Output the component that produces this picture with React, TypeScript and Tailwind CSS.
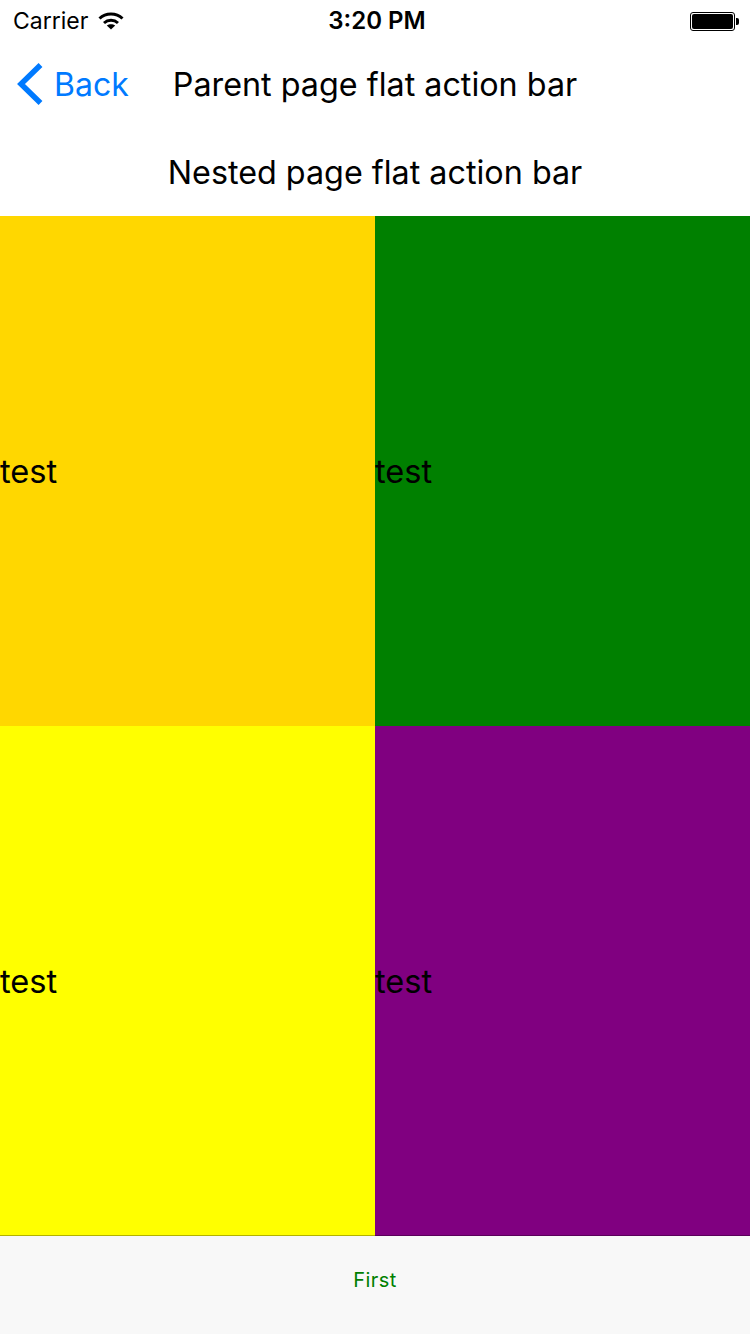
const cells = [
  { id: "orange", className: "bg-[#ffd700]" },
  { id: "green", className: "bg-[#008000]" },
  { id: "yellow", className: "bg-[#ffff00]" },
  { id: "purple", className: "bg-[#800080]" },
];

function WifiIcon() {
  return (
    <svg width="26" height="18" viewBox="0 0 26 18" fill="none" stroke="#000" strokeWidth="3">
      <path d="M1.5 6.5C7.8 .5 18.2 .5 24.5 6.5" />
      <path d="M6 11C10 7.4 16 7.4 20 11" />
      <path d="M13 17.5L8.8 13.6C11.2 11.8 14.8 11.8 17.2 13.6Z" fill="#000" stroke="none" />
    </svg>
  );
}

function Battery() {
  return (
    <div className="flex items-center">
      <div className="w-[45px] h-[19px] rounded-[3px] border border-black p-[1px]">
        <div className="w-full h-full bg-black rounded-[2px]" />
      </div>
      <div className="w-[3px] h-[7px] bg-black rounded-r-[2px] ml-[1px]" />
    </div>
  );
}

export default function App() {
  return (
    <div className="w-[750px] h-[1334px] flex flex-col bg-white text-black overflow-hidden font-['Inter','Liberation_Sans',sans-serif]">
      <div className="relative h-[40px] flex items-center justify-between pl-[13px] pr-[11px] pt-[2px]">
        <div className="flex items-center gap-[10px]">
          <span className="text-[23px] leading-none">Carrier</span>
          <WifiIcon />
        </div>
        <span className="absolute left-[4px] right-0 text-center text-[24px] leading-none font-semibold">3:20 PM</span>
        <Battery />
      </div>

      <div className="relative h-[88px] flex items-center justify-center pt-[2px]">
        <div className="absolute left-[17px] top-0 h-full flex items-center gap-[11px] text-[#007aff]">
          <svg width="26" height="42" viewBox="0 0 26 42" fill="none" stroke="currentColor" strokeWidth="5.5">
            <path d="M23.5 2L4 21L23.5 40" />
          </svg>
          <span className="text-[32px] leading-none pt-[2px]">Back</span>
        </div>
        <span className="text-[32.3px] leading-none">Parent page flat action bar</span>
      </div>

      <div className="h-[88px] flex items-center justify-center pt-[2px]">
        <span className="text-[32.3px] leading-none">Nested page flat action bar</span>
      </div>

      <div className="grid grid-cols-2 grid-rows-2 flex-1">
        {cells.map((cell) => (
          <div key={cell.id} className={`flex items-center pt-[1px] text-[32.6px] leading-none ${cell.className}`}>
            test
          </div>
        ))}
      </div>

      <div className="relative h-[98px] flex items-center justify-center bg-[#f8f8f8] pb-[10px]">
        <div className="absolute left-0 right-0 top-[-1px] h-px bg-black/30" />
        <span className="text-[20px] tracking-[0.4px] leading-none text-[#008000]">First</span>
      </div>
    </div>
  );
}
